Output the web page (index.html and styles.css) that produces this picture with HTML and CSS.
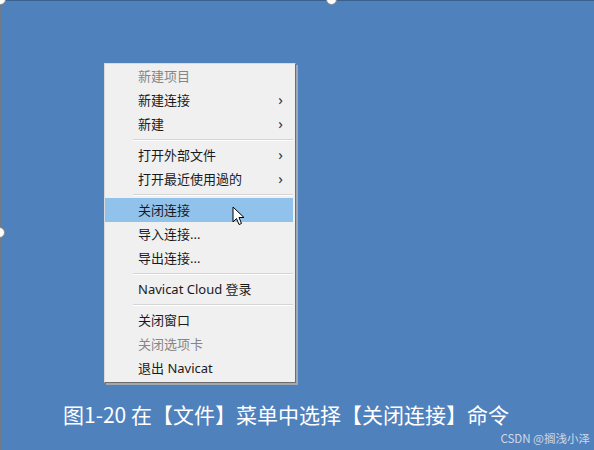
FILE: index.html
```html
<!DOCTYPE html>
<html lang="zh-CN">
<head>
  <meta charset="UTF-8" />
  <meta name="viewport" content="width=device-width, initial-scale=1.0" />
  <title>关闭连接</title>
  <link rel="stylesheet" href="styles.css">
</head>
<body>
  <div class="slide">
    <span class="handle h-tl"></span>
    <span class="handle h-tm"></span>
    <span class="handle h-ml"></span>

    <div class="menu">
      <div class="item disabled">新建项目</div>
      <div class="item">新建连接<span class="arrow">&rsaquo;</span></div>
      <div class="item">新建<span class="arrow">&rsaquo;</span></div>
      <div class="sep"></div>
      <div class="item">打开外部文件<span class="arrow">&rsaquo;</span></div>
      <div class="item">打开最近使用過的<span class="arrow">&rsaquo;</span></div>
      <div class="sep"></div>
      <div class="item active">关闭连接
        <svg class="cursor" width="14" height="22" viewBox="0 0 14 22">
          <path d="M1 1 L1 16 L4.5 12.5 L7 18.5 L9.5 17.5 L7 11.5 L12 11.5 Z" fill="#fff" stroke="#000" stroke-width="1" stroke-linejoin="round"/>
        </svg>
      </div>
      <div class="item">导入连接...</div>
      <div class="item">导出连接...</div>
      <div class="sep"></div>
      <div class="item">Navicat Cloud 登录</div>
      <div class="sep"></div>
      <div class="item">关闭窗口</div>
      <div class="item disabled">关闭选项卡</div>
      <div class="item">退出 Navicat</div>
    </div>

    <p class="caption">图1-20 在【文件】菜单中选择【关闭连接】命令</p>
    <p class="mark">CSDN @搁浅小泽</p>
  </div>
</body>
</html>
```

FILE: styles.css
```css
* {
  margin: 0;
  padding: 0;
  box-sizing: border-box;
}

body {
  width: 594px;
  height: 450px;
  overflow: hidden;
  font-family: "Noto Sans", "Noto Sans CJK SC", sans-serif;
}

.slide {
  position: relative;
  width: 594px;
  height: 450px;
  background: #4f81bd;
  border-top: 1px solid #3b618f;
  border-left: 2px solid #6f7b89;
  padding: 62px 0 0 102px;
}

.handle {
  position: absolute;
  width: 11px;
  height: 11px;
  border-radius: 50%;
  background: #fff;
  border: 1px solid #8a8a8a;
}

.h-tl { left: -7px; top: -7px; }
.h-tm { left: 324px; top: -7px; }
.h-ml { left: -8px; top: 226px; }

/* context menu */
.menu {
  width: 192px;
  background: #f0f0f0;
  border: 1px solid #dadada;
  border-right: 1px solid #6d6d6d;
  border-bottom: 1px solid #6d6d6d;
  box-shadow: 2px 2px 0 #a3a8b0;
  padding: 0 2px 2px 0;
}

.item {
  position: relative;
  height: 24px;
  line-height: 24px;
  padding-left: 33px;
  font-size: 13px;
  color: #1a1a1a;
}

.item.disabled {
  color: #858585;
}

.item.active {
  background: #91c2eb;
}

.arrow {
  position: absolute;
  right: 10px;
  top: -1px;
  font-size: 15px;
  color: #333;
}

.sep {
  height: 1px;
  margin: 3px 0 2px 28px;
  background: #d4d4d4;
  border-bottom: 1px solid #fff;
  box-sizing: content-box;
}

.cursor {
  position: absolute;
  left: 127px;
  top: 8px;
}

.caption {
  margin-top: 17px;
  margin-left: -41px;
  font-family: "Noto Sans CJK SC", sans-serif;
  font-size: 21px;
  line-height: 28px;
  color: #fff;
}

.mark {
  position: absolute;
  right: 4px;
  bottom: 4px;
  font-family: "Noto Sans CJK SC", sans-serif;
  font-size: 11.5px;
  color: #cfd8e6;
}
```
